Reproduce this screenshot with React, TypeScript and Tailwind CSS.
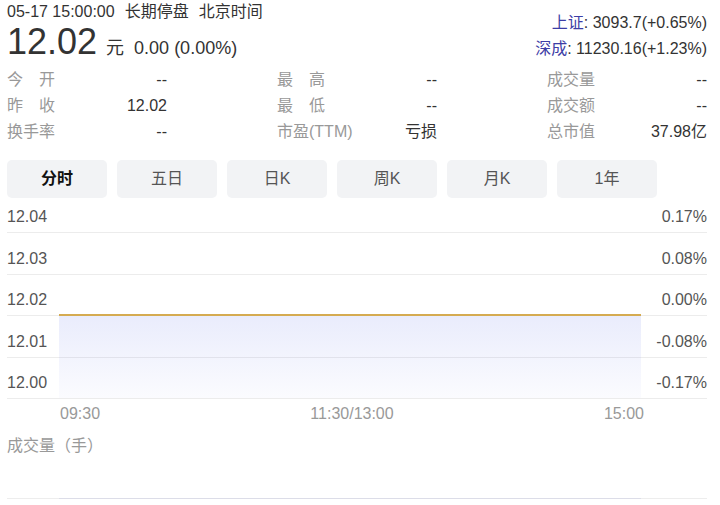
import React from "react";

const stats = [
  [
    { label: "今开", spread: true, value: "--" },
    { label: "最高", spread: true, value: "--" },
    { label: "成交量", spread: false, value: "--" },
  ],
  [
    { label: "昨收", spread: true, value: "12.02" },
    { label: "最低", spread: true, value: "--" },
    { label: "成交额", spread: false, value: "--" },
  ],
  [
    { label: "换手率", spread: false, value: "--" },
    { label: "市盈(TTM)", spread: false, value: "亏损" },
    { label: "总市值", spread: false, value: "37.98亿" },
  ],
];

const tabs = ["分时", "五日", "日K", "周K", "月K", "1年"];

const rows = [
  { left: "12.04", right: "0.17%", first: true },
  { left: "12.03", right: "0.08%" },
  { left: "12.02", right: "0.00%" },
  { left: "12.01", right: "-0.08%" },
  { left: "12.00", right: "-0.17%" },
];

export default function App() {
  return (
    <div className="w-[720px] h-[505px] overflow-hidden bg-white font-['Liberation_Sans','Noto_Sans_CJK_SC',sans-serif] text-[16px]">
      <div className="ml-[7px] w-[700px]">
        {/* Header */}
        <div className="flex justify-between h-[62px]">
          <div className="pt-[2px]">
            <div className="leading-[20px] text-[#333] whitespace-nowrap">
              05-17 15:00:00
              <span className="ml-[10px]">长期停盘</span>
              <span className="ml-[10px]">北京时间</span>
            </div>
            <div className="flex items-baseline h-[40px] text-[#333]">
              <span className="text-[36px] leading-[40px]">12.02</span>
              <span className="text-[18px] ml-[9px]">元</span>
              <span className="text-[18px] ml-[10px]">0.00 (0.00%)</span>
            </div>
          </div>
          <div className="pt-[10px] text-right text-[#333] leading-[26px] whitespace-nowrap">
            <div>
              <span className="text-[#3d3da6]">上证</span>: 3093.7(+0.65%)
            </div>
            <div>
              <span className="text-[#3d3da6]">深成</span>: 11230.16(+1.23%)
            </div>
          </div>
        </div>

        {/* Stats */}
        <div className="mt-[5px] flex flex-col">
          {stats.map((row, i) => (
            <div key={i} className="grid grid-cols-[160px_160px_160px] gap-x-[110px] h-[26px] leading-[26px]">
              {row.map((c, j) => (
                <div key={j} className="flex justify-between">
                  {c.spread ? (
                    <span className="flex justify-between w-[48px] text-[#999]">
                      <span>{c.label[0]}</span>
                      <span>{c.label[1]}</span>
                    </span>
                  ) : (
                    <span className="text-[#999]">{c.label}</span>
                  )}
                  <span className="text-[#333]">{c.value}</span>
                </div>
              ))}
            </div>
          ))}
        </div>

        {/* Tabs */}
        <div className="mt-[15px] flex gap-[10px]">
          {tabs.map((t, i) => (
            <div
              key={t}
              className={
                i === 0
                  ? "w-[100px] h-[38px] rounded-[5px] bg-[#f2f3f5] flex items-center justify-center font-bold text-[#111]"
                  : "w-[100px] h-[38px] rounded-[5px] bg-[#f2f3f5] flex items-center justify-center text-[#555]"
              }
            >
              {t}
            </div>
          ))}
        </div>

        {/* Chart */}
        <div className="relative">
          {rows.map((r) => (
            <div
              key={r.left}
              className={
                (r.first ? "h-[35px] " : "h-[41.5px] ") +
                "border-b border-[#ececec] flex justify-between items-end pb-[5px] leading-[20px] text-[#555]"
              }
            >
              <span>{r.left}</span>
              <span>{r.right}</span>
            </div>
          ))}
          <div className="absolute left-[52px] top-[116px] w-[582px] h-[2px] bg-[#d5ab51]" />
          <div className="absolute left-[52px] top-[118px] w-[582px] h-[82px] bg-linear-to-b from-[#5064e61f] to-[#5064e606]" />
        </div>

        {/* Time axis */}
        <div className="pt-[5px] h-[30px] flex">
          <div className="ml-[53px] w-[584px] flex justify-between leading-[20px] text-[#999]">
            <span>09:30</span>
            <span>11:30/13:00</span>
            <span>15:00</span>
          </div>
        </div>

        {/* Volume */}
        <div className="mt-[7px] leading-[20px] text-[#999]">成交量（手）</div>
        <div className="relative h-[43px] border-b border-[#ededed]">
          <div className="absolute left-[52px] bottom-[-1px] w-[582px] h-px bg-[#dcdde8]" />
        </div>
      </div>
    </div>
  );
}
